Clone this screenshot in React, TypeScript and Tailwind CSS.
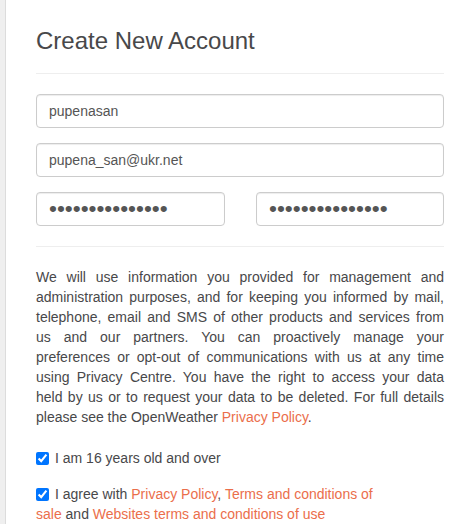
import React from "react";

const linkCls = "text-[#eb6e4b]";

// line breaks follow the reference (its font renders a bit wider)
const policyLines = [
  "We will use information you provided for management and",
  "administration purposes, and for keeping you informed by mail,",
  "telephone, email and SMS of other products and services from",
  "us and our partners. You can proactively manage your",
  "preferences or opt-out of communications with us at any time",
  "using Privacy Centre. You have the right to access your data",
  "held by us or to request your data to be deleted. For full details",
];

function TextInput({ value, type = "text" }: { value: string; type?: string }) {
  return (
    <input
      type={type}
      defaultValue={value}
      readOnly
      className={
        "block w-full h-[34px] px-3 text-[#555] bg-white border border-[#ccc] rounded-[4px] shadow-[inset_0_1px_1px_rgba(0,0,0,0.075)] outline-none font-[inherit] " +
        (type === "password" ? "text-[22.6px]" : "text-[14px]")
      }
    />
  );
}

export default function App() {
  return (
    <div
      className="flex min-h-[524px] w-[472px] bg-white text-[#48484a]"
      style={{ fontFamily: '"Liberation Sans", Arial, sans-serif' }}
    >
      {/* left edge */}
      <div className="w-[6px] shrink-0 bg-[#efefef] border-r border-[#dcdcdc]" />

      <div className="flex-1 pl-[30px] pr-[28px]">
        <h2 className="mt-[28px] text-[24px] leading-[26.4px] font-normal text-[#48484a]">
          Create New Account
        </h2>
        <hr className="mt-[19px] border-0 border-t border-[#eee]" />

        <div className="mt-[20px] flex flex-col gap-[15px]">
          <TextInput value="pupenasan" />
          <TextInput value="pupena_san@ukr.net" />
          <div className="flex gap-[31px]">
            <div className="w-[189px]">
              <TextInput type="password" value="aaaaaaaaaaaaaaa" />
            </div>
            <div className="flex-1">
              <TextInput type="password" value="aaaaaaaaaaaaaaa" />
            </div>
          </div>
        </div>

        <hr className="mt-[20px] border-0 border-t border-[#eee]" />

        <p className="mt-[20px] text-[14px] leading-[20px]">
          {policyLines.map((line) => (
            <span key={line} className="block text-justify [text-align-last:justify]">
              {line}
            </span>
          ))}
          <span className="block">
            please see the OpenWeather <span className={linkCls}>Privacy Policy</span>.
          </span>
        </p>

        <label className="mt-[21px] flex items-center gap-[6px] text-[14px] leading-[20px]">
          <input type="checkbox" defaultChecked className="m-0 w-[13px] h-[13px]" />
          <span>I am 16 years old and over</span>
        </label>

        <div className="mt-[16px] w-[345px] text-[14px] leading-[20px]">
          <input type="checkbox" defaultChecked className="m-0 mr-[6px] w-[13px] h-[13px] align-[-2px]" />
          I agree with <span className={linkCls}>Privacy Policy</span>,{" "}
          <span className={linkCls}>Terms and conditions of sale</span> and{" "}
          <span className={linkCls}>Websites terms and conditions of use</span>
        </div>
      </div>
    </div>
  );
}
